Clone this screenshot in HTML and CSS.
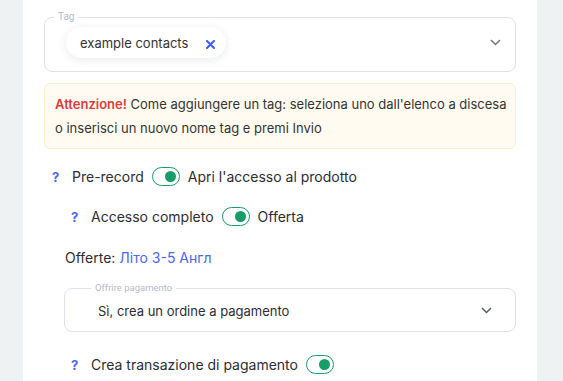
FILE: index.html
```html
<!DOCTYPE html>
<html lang="it">
  <head>
    <meta charset="UTF-8" />
    <meta name="viewport" content="width=device-width, initial-scale=1.0" />
    <title>Impostazioni tag</title>
    <link rel="stylesheet" href="styles.css">
  </head>
  <body>
    <div class="card">
      <div class="field tag-field">
        <span class="field-label">Tag</span>
        <span class="chip">
          example contacts
          <svg class="chip-x" width="9" height="9" viewBox="0 0 9 9">
            <path d="M1 1 L8 8 M8 1 L1 8" stroke="#3f5bf6" stroke-width="2" stroke-linecap="round" />
          </svg>
        </span>
        <svg class="chevron" width="11" height="7" viewBox="0 0 11 7">
          <path d="M1 1 L5.5 5.5 L10 1" fill="none" stroke="#6f7480" stroke-width="1.5" />
        </svg>
      </div>

      <div class="alert">
        <strong>Attenzione!</strong> Come aggiungere un tag: seleziona uno dall'elenco a discesa
        o inserisci un nuovo nome tag e premi Invio
      </div>

      <div class="row first">
        <span class="help">?</span>
        <span>Pre-record</span>
        <span class="toggle"><span class="knob"></span></span>
        <span>Apri l'accesso al prodotto</span>
      </div>

      <div class="row sub">
        <span class="help">?</span>
        <span>Accesso completo</span>
        <span class="toggle"><span class="knob"></span></span>
        <span>Offerta</span>
      </div>

      <div class="offers">
        Offerte: <a href="#" class="link">Літо 3-5 Англ</a>
      </div>

      <div class="field select-field">
        <span class="field-label">Offrire pagamento</span>
        <span class="select-value">Sì, crea un ordine a pagamento</span>
        <svg class="chevron" width="11" height="7" viewBox="0 0 11 7">
          <path d="M1 1 L5.5 5.5 L10 1" fill="none" stroke="#555a66" stroke-width="1.5" />
        </svg>
      </div>

      <div class="row sub last">
        <span class="help">?</span>
        <span>Crea transazione di pagamento</span>
        <span class="toggle"><span class="knob"></span></span>
      </div>
    </div>
  </body>
</html>
```

FILE: styles.css
```css
body {
  margin: 0;
  background-color: #eef2f3;
  font-family: Inter, "Noto Sans", sans-serif;
  color: #2b2d33;
}

.card {
  margin-left: 23px;
  width: 514px;
  min-height: 381px;
  box-sizing: border-box;
  padding: 17px 21px 0 21px;
  background-color: #fff;
}

.field {
  position: relative;
  display: flex;
  align-items: center;
  border: 1px solid #dfe1ee;
  border-radius: 8px;
  box-sizing: border-box;
}

.field-label {
  position: absolute;
  top: -7px;
  left: 9px;
  padding: 0 4px;
  background-color: #fff;
  font-family: Roboto, sans-serif;
  font-size: 10px;
  line-height: 12px;
  color: #b3bac8;
}

.tag-field {
  height: 55px;
  padding: 0 14px 4px 21px;
}

.chip {
  display: inline-flex;
  align-items: center;
  height: 31px;
  padding: 0 11px 0 14px;
  border-radius: 16px;
  background-color: #fff;
  box-shadow: 0 2px 8px rgba(40, 50, 80, 0.1);
  font-size: 13px;
  color: #333;
}

.chip-x {
  margin-left: 18px;
  margin-top: 3px;
}

.chevron {
  margin-left: auto;
}

.alert {
  margin-top: 11px;
  padding: 8px 4px 8px 10px;
  border: 1px solid #faeecb;
  border-radius: 6px;
  background-color: #fffbf1;
  font-size: 13px;
  line-height: 24px;
  color: #333;
}

.alert strong {
  color: #e03a3a;
  font-weight: 600;
}

.row {
  display: flex;
  align-items: center;
  gap: 8px;
  padding-left: 8px;
  font-size: 14px;
}

.row.first {
  margin-top: 18px;
}

.row.sub {
  padding-left: 27px;
  margin-top: 21px;
}

.help {
  width: 7px;
  margin-right: 5px;
  color: #4a67f0;
  font-weight: 700;
  font-size: 13px;
}

.toggle {
  position: relative;
  width: 28px;
  height: 19px;
  box-sizing: border-box;
  border: 1.5px solid #179d68;
  border-radius: 10px;
}

.knob {
  position: absolute;
  top: 2.5px;
  right: 2.5px;
  width: 11px;
  height: 11px;
  border-radius: 50%;
  background-color: #179d68;
}

.offers {
  margin-top: 23px;
  padding-left: 21px;
  font-size: 14px;
}

.link {
  color: #4a67f0;
  text-decoration: none;
}

.select-field {
  margin-top: 22px;
  margin-left: 20px;
  height: 44px;
  padding: 0 23px 0 33px;
}

.select-field .field-label {
  left: 26px;
  font-size: 9.5px;
}

.select-value {
  font-size: 13px;
  margin-top: 1px;
}

.row.sub.last {
  margin-top: 23px;
}
```
